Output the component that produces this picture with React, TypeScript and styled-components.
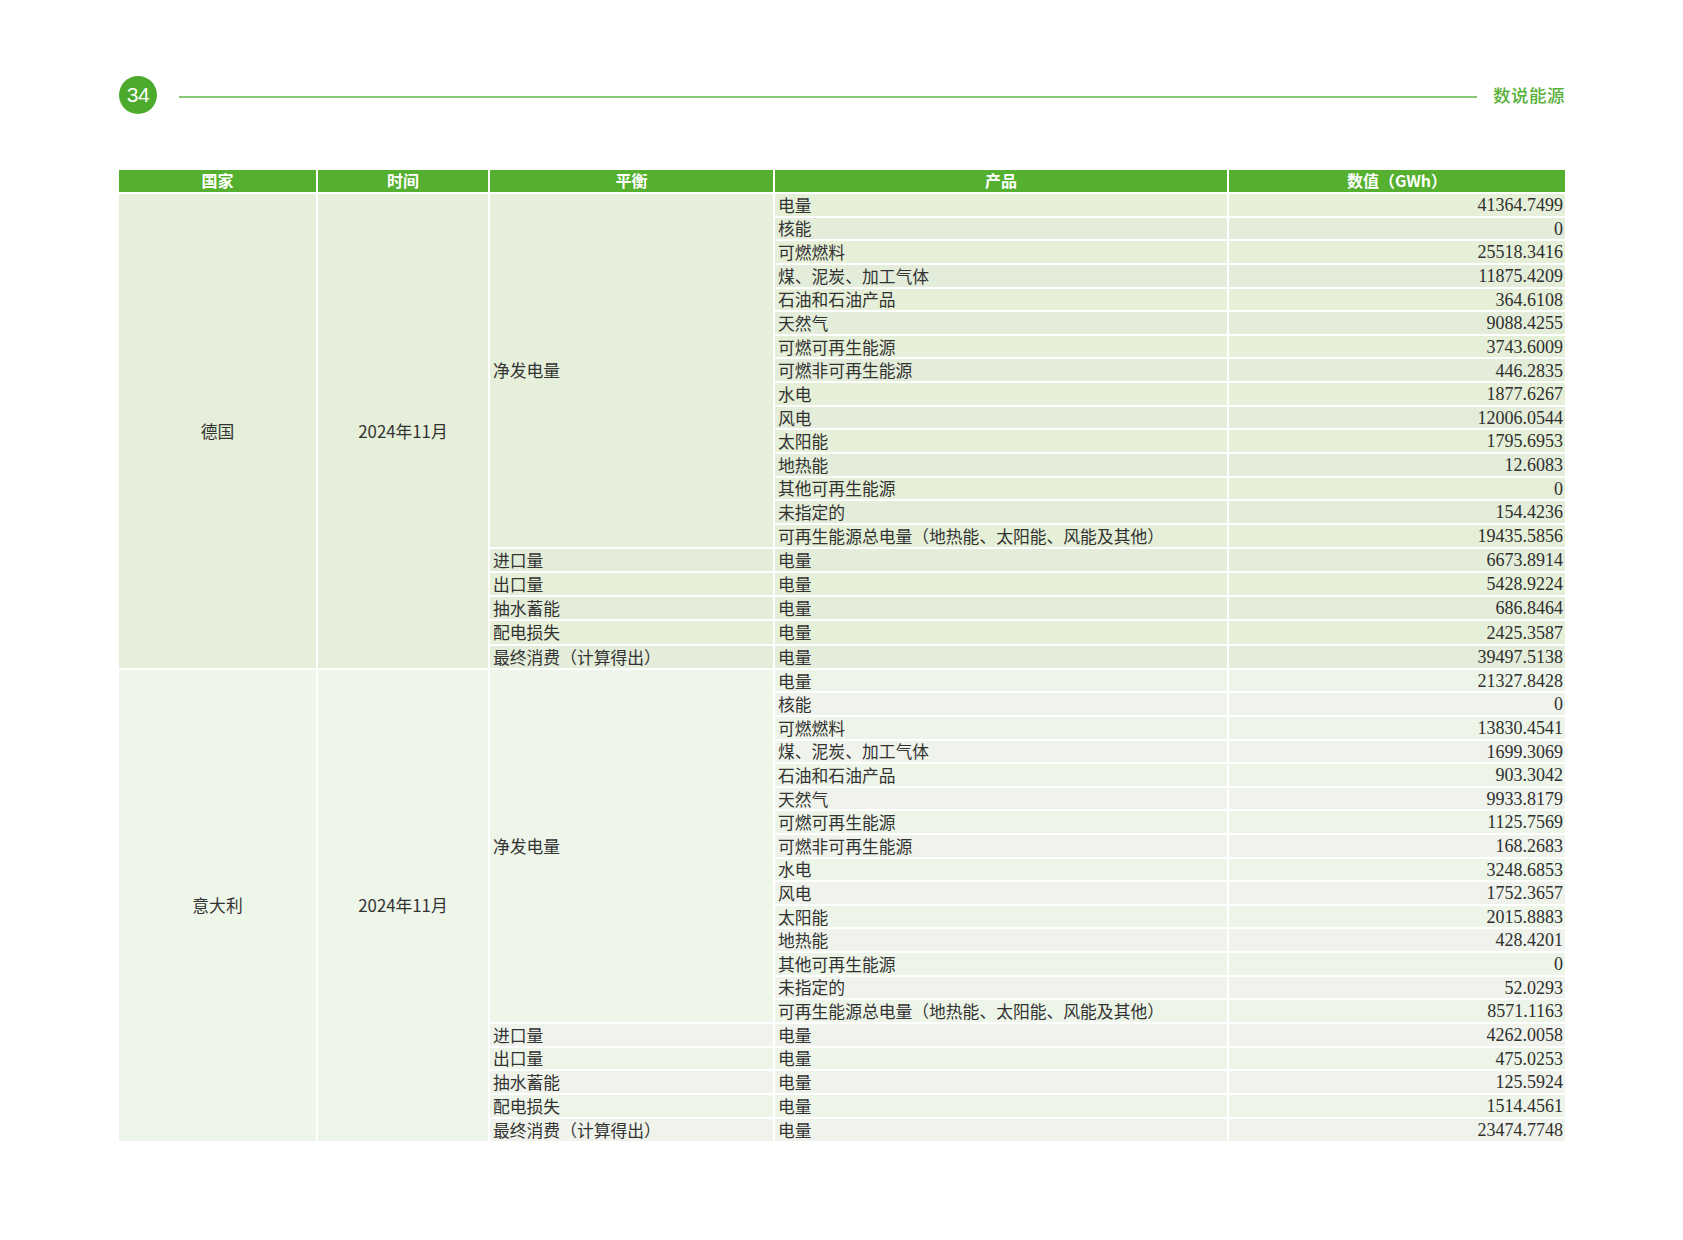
import React from "react";
import styled, { createGlobalStyle } from "styled-components";

const Global = createGlobalStyle`
  html, body { margin: 0; padding: 0; background: #ffffff; }
  body { font-family: "Noto Sans CJK SC", "Noto Sans", sans-serif; }
`;

const Page = styled.div`
  width: 1683px;
  height: 1240px;
  box-sizing: border-box;
  padding: 76px 118px 0 119px;
  background: #fff;
`;

const TopBar = styled.header`
  display: flex;
  align-items: center;
  height: 38px;
`;

const PageNo = styled.div`
  width: 38px;
  height: 38px;
  border-radius: 50%;
  background: #4caa2c;
  color: #fff;
  display: flex;
  align-items: center;
  justify-content: center;
  font-family: "Liberation Sans", Arial, sans-serif;
  font-size: 21px;
  letter-spacing: -0.5px;
  flex: none;
`;

const Rule = styled.div`
  flex: 1;
  height: 1.5px;
  background: #86c874;
  margin: 4px 16px 0 22px;
`;

const Brand = styled.div`
  color: #58b13a;
  font-size: 17.5px;
  font-weight: 500;
  letter-spacing: 0.5px;
  margin-bottom: 2px;
`;

const Table = styled.div`
  margin-top: 56px;
  display: grid;
  grid-template-columns: 197px 170px 283px 452px 336px;
  grid-template-rows: 22px repeat(15, 21.65px) repeat(5, 22.25px) repeat(15, 21.6px) repeat(5, 21.8px);
  column-gap: 2px;
  row-gap: 2px;
  background: #fff;
`;

const Head = styled.div<{ $col: number }>`
  grid-column: ${(p) => p.$col};
  grid-row: 1;
  background: #54b02e;
  color: #fff;
  font-weight: 700;
  font-size: 16px;
  display: flex;
  align-items: center;
  justify-content: center;
  line-height: 1.2;
`;

type Tone = "de" | "it";

const MERGED: Record<Tone, string> = { de: "#e5efd9", it: "#eef5e9" };
const ROW_A: Record<Tone, string> = { de: "#e6f0d8", it: "#edf5e8" };
const ROW_B: Record<Tone, string> = { de: "#e3edda", it: "#f0f3eb" };

const Merged = styled.div<{ $col: number; $span: number; $tone: Tone; $center?: boolean }>`
  grid-column: ${(p) => p.$col};
  grid-row: span ${(p) => p.$span};
  background: ${(p) => MERGED[p.$tone]};
  display: flex;
  align-items: center;
  justify-content: ${(p) => (p.$center ? "center" : "flex-start")};
  padding-left: ${(p) => (p.$center ? "0" : "3px")};
  color: #333;
  font-size: 16.8px;
  line-height: 1.2;
`;

const Cell = styled.div<{ $col: number; $tone: Tone; $alt: boolean }>`
  grid-column: ${(p) => p.$col};
  background: ${(p) => (p.$alt ? ROW_B[p.$tone] : ROW_A[p.$tone])};
  display: flex;
  align-items: center;
  padding: 0 3px;
  color: #333;
  font-size: 16.8px;
  line-height: 1.2;
  white-space: nowrap;
  min-height: 0;
`;

const Num = styled(Cell)`
  justify-content: flex-end;
  padding: 2px 2px 0 3px;
  font-family: "Liberation Serif", "Times New Roman", serif;
  font-size: 18px;
  letter-spacing: 0;
  color: #2f2f2f;
`;

const GEN_PRODUCTS = [
  "电量",
  "核能",
  "可燃燃料",
  "煤、泥炭、加工气体",
  "石油和石油产品",
  "天然气",
  "可燃可再生能源",
  "可燃非可再生能源",
  "水电",
  "风电",
  "太阳能",
  "地热能",
  "其他可再生能源",
  "未指定的",
  "可再生能源总电量（地热能、太阳能、风能及其他）",
];

const OTHER_BALANCES = ["进口量", "出口量", "抽水蓄能", "配电损失", "最终消费（计算得出）"];

type Block = { tone: Tone; country: string; gen: string[]; other: string[] };

const BLOCKS: Block[] = [
  {
    tone: "de",
    country: "德国",
    gen: [
      "41364.7499",
      "0",
      "25518.3416",
      "11875.4209",
      "364.6108",
      "9088.4255",
      "3743.6009",
      "446.2835",
      "1877.6267",
      "12006.0544",
      "1795.6953",
      "12.6083",
      "0",
      "154.4236",
      "19435.5856",
    ],
    other: ["6673.8914", "5428.9224", "686.8464", "2425.3587", "39497.5138"],
  },
  {
    tone: "it",
    country: "意大利",
    gen: [
      "21327.8428",
      "0",
      "13830.4541",
      "1699.3069",
      "903.3042",
      "9933.8179",
      "1125.7569",
      "168.2683",
      "3248.6853",
      "1752.3657",
      "2015.8883",
      "428.4201",
      "0",
      "52.0293",
      "8571.1163",
    ],
    other: ["4262.0058", "475.0253", "125.5924", "1514.4561", "23474.7748"],
  },
];

function BlockRows({ block }: { block: Block }) {
  const t = block.tone;
  return (
    <>
      <Merged $col={1} $span={20} $tone={t} $center>
        {block.country}
      </Merged>
      <Merged $col={2} $span={20} $tone={t} $center>
        2024年11月
      </Merged>
      <Merged $col={3} $span={15} $tone={t}>
        净发电量
      </Merged>
      {GEN_PRODUCTS.map((p, i) => (
        <React.Fragment key={p}>
          <Cell $col={4} $tone={t} $alt={i % 2 === 1}>
            {p}
          </Cell>
          <Num $col={5} $tone={t} $alt={i % 2 === 1}>
            {block.gen[i]}
          </Num>
        </React.Fragment>
      ))}
      {OTHER_BALANCES.map((b, i) => {
        const alt = (i + 15) % 2 === 1;
        return (
          <React.Fragment key={b}>
            <Cell $col={3} $tone={t} $alt={alt}>
              {b}
            </Cell>
            <Cell $col={4} $tone={t} $alt={alt}>
              电量
            </Cell>
            <Num $col={5} $tone={t} $alt={alt}>
              {block.other[i]}
            </Num>
          </React.Fragment>
        );
      })}
    </>
  );
}

export default function App() {
  return (
    <>
      <Global />
      <Page>
        <TopBar>
          <PageNo>34</PageNo>
          <Rule />
          <Brand>数说能源</Brand>
        </TopBar>
        <Table>
          <Head $col={1}>国家</Head>
          <Head $col={2}>时间</Head>
          <Head $col={3}>平衡</Head>
          <Head $col={4}>产品</Head>
          <Head $col={5}>数值（GWh）</Head>
          {BLOCKS.map((b) => (
            <BlockRows key={b.country} block={b} />
          ))}
        </Table>
      </Page>
    </>
  );
}
